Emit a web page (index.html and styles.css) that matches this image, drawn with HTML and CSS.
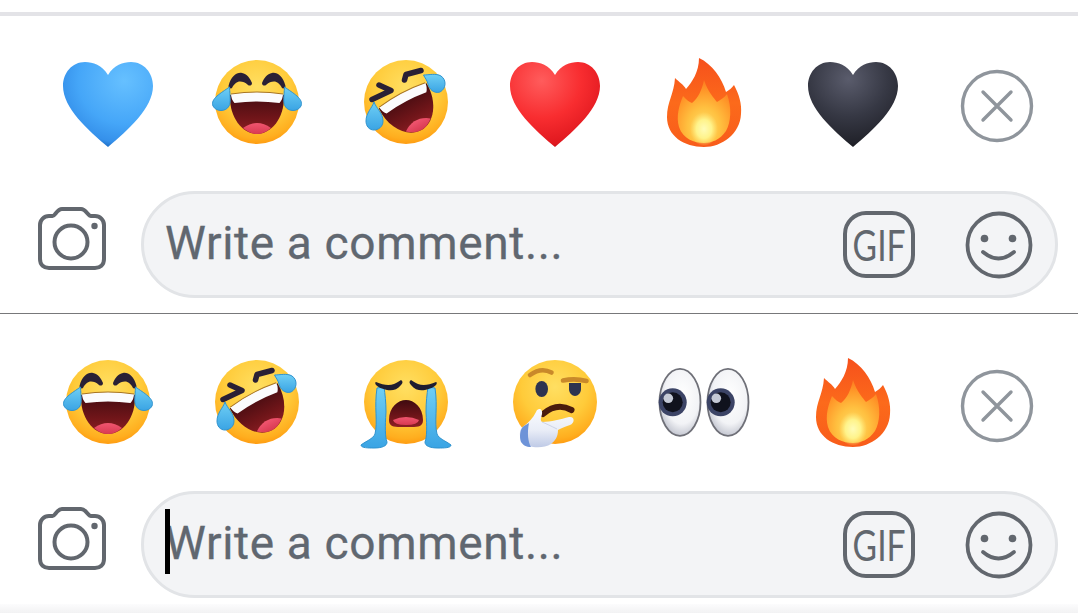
FILE: index.html
```html
<!DOCTYPE html>
<html lang="en">
<head>
<meta charset="utf-8">
<title>Write a comment</title>
<link rel="stylesheet" href="styles.css">
</head>
<body>
<svg class="defs" aria-hidden="true">
  <defs>
    <radialGradient id="gBlue" cx="0.68" cy="0.22" r="0.85">
      <stop offset="0" stop-color="#66c0ff"/><stop offset="0.6" stop-color="#45a6f8"/><stop offset="0.86" stop-color="#3590ea"/><stop offset="1" stop-color="#0d57ad"/>
    </radialGradient>
    <radialGradient id="gRed" cx="0.35" cy="0.22" r="0.88">
      <stop offset="0" stop-color="#ff5c5c"/><stop offset="0.5" stop-color="#f82d30"/><stop offset="0.86" stop-color="#e0181f"/><stop offset="1" stop-color="#8e0a10"/>
    </radialGradient>
    <radialGradient id="gBlack" cx="0.45" cy="0.2" r="0.88">
      <stop offset="0" stop-color="#5a5c6c"/><stop offset="0.5" stop-color="#363844"/><stop offset="0.85" stop-color="#22232b"/><stop offset="1" stop-color="#0e0e13"/>
    </radialGradient>
    <radialGradient id="gFace" cx="0.5" cy="0.32" r="0.72">
      <stop offset="0" stop-color="#ffdf62"/><stop offset="0.55" stop-color="#ffcb3a"/><stop offset="0.85" stop-color="#ffae1f"/><stop offset="1" stop-color="#ff930a"/>
    </radialGradient>
    <linearGradient id="gMouth" x1="0" y1="0" x2="0" y2="1">
      <stop offset="0" stop-color="#3f0b10"/><stop offset="0.6" stop-color="#6f1519"/><stop offset="1" stop-color="#8e1f24"/>
    </linearGradient>
    <linearGradient id="gTongue" x1="0" y1="0" x2="0" y2="1">
      <stop offset="0" stop-color="#f0556f"/><stop offset="1" stop-color="#d93a52"/>
    </linearGradient>
    <linearGradient id="gTear" x1="0" y1="0" x2="0" y2="1">
      <stop offset="0" stop-color="#6fcff5"/><stop offset="1" stop-color="#3aa4e4"/>
    </linearGradient>
    <linearGradient id="gFlame" x1="0" y1="0" x2="0" y2="1">
      <stop offset="0" stop-color="#f6501c"/><stop offset="0.5" stop-color="#fc6a1b"/><stop offset="1" stop-color="#f85c1a"/>
    </linearGradient>
    <radialGradient id="gFlameIn" cx="0.5" cy="0.75" r="0.78">
      <stop offset="0" stop-color="#ffe26a"/><stop offset="0.4" stop-color="#ffc040"/><stop offset="0.72" stop-color="#ff9a2a"/><stop offset="1" stop-color="#fd741e"/>
    </radialGradient>
    <radialGradient id="gFlameCore">
      <stop offset="0" stop-color="#fffcb8"/><stop offset="0.55" stop-color="#fff38a"/><stop offset="1" stop-color="#ffe070" stop-opacity="0"/>
    </radialGradient>
    <radialGradient id="gEye" cx="0.55" cy="0.4" r="0.65">
      <stop offset="0" stop-color="#ffffff"/><stop offset="0.65" stop-color="#f2f3f6"/><stop offset="1" stop-color="#b9bcc8"/>
    </radialGradient>
    <linearGradient id="gHand" x1="0" y1="0" x2="0" y2="1">
      <stop offset="0" stop-color="#fafbff"/><stop offset="0.55" stop-color="#e9edf7"/><stop offset="1" stop-color="#bfcae6"/>
    </linearGradient>
    <symbol id="heart" viewBox="0 0 100 100">
      <path d="M50 23C44 13 35 10 27 10C14 10 5 21 5 34C5 56 30 78 50 95C70 78 95 56 95 34C95 21 86 10 73 10C65 10 56 13 50 23Z"/>
    </symbol>
    <symbol id="laugh" viewBox="0 0 100 100">
      <circle cx="50" cy="50" r="42" fill="url(#gFace)"/>
      <path d="M21.500 34C24 24 30 20 35 21C40 22 43 26 45 31C45 34 42 34 41 33C38 30 36 29.500 33 29.500C30 29.500 27 32 25 36C24 37 21.500 36 21.500 34Z" fill="#2a2035"/>
      <path d="M78.500 34C76 24 70 20 65 21C60 22 57 26 55 31C55 34 58 34 59 33C62 30 64 29.500 67 29.500C70 29.500 73 32 75 36C76 37 78.500 36 78.500 34Z" fill="#2a2035"/>
      <path d="M23 43Q50 38 77 43C78 65 65 82 50 82C35 82 22 65 23 43Z" fill="url(#gMouth)"/>
      <path d="M24 42Q50 38 76 42Q76 47 72.500 51Q50 48 27.500 51Q24 47 24 42Z" fill="#fbfbfd"/>
      <path d="M24 42Q50 38 76 42" fill="none" stroke="#a87420" stroke-width="1"/>
      <path d="M36 76Q50 66 64 76Q57 82 50 82Q43 82 36 76Z" fill="url(#gTongue)"/>
      <path fill="url(#gTear)" stroke="#2f93cf" stroke-width="1" d="M22.500 35C23 45 24 50 22 54C19 60 9 60 6 54C3 47 14 41 22.500 35Z"/>
      <path fill="url(#gTear)" stroke="#2f93cf" stroke-width="1" d="M77.500 35C77 45 76 50 78 54C81 60 91 60 94 54C97 47 86 41 77.500 35Z"/>
    </symbol>
    <symbol id="rofl" viewBox="0 0 100 100">
      <circle cx="50" cy="50" r="42" fill="url(#gFace)"/>
      <g transform="rotate(-28 50 50)">
        <path d="M23 43Q50 38 77 43C78 65 65 82 50 82C35 82 22 65 23 43Z" fill="url(#gMouth)"/>
        <path d="M24 42Q50 38 76 42Q76 47 72.500 51Q50 48 27.500 51Q24 47 24 42Z" fill="#fbfbfd"/>
        <path d="M24 42Q50 38 76 42" fill="none" stroke="#a87420" stroke-width="1"/>
        <path d="M36 76Q50 66 64 76Q57 82 50 82Q43 82 36 76Z" fill="url(#gTongue)"/>
      </g>
      <path d="M23 33L35 38.500L16 47.500" fill="none" stroke="#2a2035" stroke-width="5.500" stroke-linecap="round" stroke-linejoin="round"/>
      <path d="M65 18.500L50 22.500L48.500 28" fill="none" stroke="#2a2035" stroke-width="5.500" stroke-linecap="round" stroke-linejoin="round"/>
      <path fill="url(#gTear)" stroke="#2f93cf" stroke-width="1" d="M67.500 23C73 23 80 21 85 24C91 28 90 37 84 40C78 42 73 37 72 32C71 28 69 26 67.500 23Z"/>
      <path fill="url(#gTear)" stroke="#2f93cf" stroke-width="1" d="M18 50C20 56 27 61 27 69C27 75 22 78 18 78C13 78 10 74 10 69C10 61 16 56 18 50Z"/>
    </symbol>
    <symbol id="cry" viewBox="0 0 100 100">
      <circle cx="50" cy="50" r="42" fill="url(#gFace)"/>
      <path d="M33 68C33 55 42 48 50 48C58 48 67 55 67 68C67 76 60 75 50 75C40 75 33 76 33 68Z" fill="url(#gMouth)"/>
      <path d="M37 68Q50 62 63 68Q62 73 50 73Q38 73 37 68Z" fill="url(#gTongue)"/>
      <path d="M21 36C18 55 22 70 19 82C17 87 10 89 5 93C5 96 12 96 18 96C26 96 31 94 31 90C29 85 29 75 30 60C30 50 29 42 28 35Z" fill="url(#gTear)" stroke="#2f93cf" stroke-width="1"/>
      <path d="M79 36C82 55 78 70 81 82C83 87 90 89 95 93C95 96 88 96 82 96C74 96 69 94 69 90C71 85 71 75 70 60C70 50 71 42 72 35Z" fill="url(#gTear)" stroke="#2f93cf" stroke-width="1"/>
      <path d="M20 30C27 33 33 34 38 32C41 31 43 29 45 28C47 29 47 31 45 33C41 38 36 39 31 38C26 37 22 35 20 33C19 32 19 30 20 30Z" fill="#1f1d30"/>
      <path d="M80 30C73 33 67 34 62 32C59 31 57 29 55 28C53 29 53 31 55 33C59 38 64 39 69 38C74 37 78 35 80 33C81 32 81 30 80 30Z" fill="#1f1d30"/>
    </symbol>
    <symbol id="think" viewBox="0 0 100 100">
      <circle cx="50" cy="50" r="42" fill="url(#gFace)"/>
      <path d="M25 23Q36 15 46.500 20.500M58 28.500Q70 26 81.500 29" fill="none" stroke="#c9892a" stroke-width="4.600" stroke-linecap="round"/>
      <ellipse cx="36.700" cy="37" rx="6.300" ry="8" fill="#2d3350"/>
      <path d="M64 31H76V37C76 41 73 44 70 44C67 44 64 41 64 37Z" fill="#2d3350"/>
      <path d="M38 62Q52 50 66.500 58" fill="none" stroke="#4a1c0d" stroke-width="6" stroke-linecap="round"/>
      <path d="M19 74C24 70 28 66 31 60C33 55 38 57 37 62C36 66 35 68 37 70C46 70 56 67 64 65C70 64 70 71 65 73C60 75 56 76 53 78C53 85 50 89 46 92C40 96 30 96 24 94C17 92 14 85 15 80C15 77 17 75 19 74Z" fill="url(#gHand)"/>
      <path d="M19 74C15 76 14 85 16 90C18 93 21 95 26 95C23 90 22 81 24 71Z" fill="#6d93d8"/>
      <path d="M37 70Q42 72 52 77" fill="none" stroke="#ccd3e6" stroke-width="1"/>
    </symbol>
    <symbol id="eyes" viewBox="0 0 100 100">
      <ellipse cx="26" cy="50.300" rx="20.500" ry="33.500" fill="url(#gEye)" stroke="#6f7078" stroke-width="1.800"/>
      <ellipse cx="74" cy="50.300" rx="20.500" ry="33.500" fill="url(#gEye)" stroke="#6f7078" stroke-width="1.800"/>
      <circle cx="18.700" cy="50.300" r="14" fill="#3c4466"/>
      <circle cx="18.700" cy="50.300" r="10" fill="#10121d"/>
      <circle cx="14.300" cy="46.300" r="4.800" fill="#c5cad6"/>
      <circle cx="66.700" cy="50.300" r="14" fill="#3c4466"/>
      <circle cx="66.700" cy="50.300" r="10" fill="#10121d"/>
      <circle cx="62.300" cy="46.300" r="4.800" fill="#c5cad6"/>
    </symbol>
    <symbol id="fire" viewBox="0 0 100 100">
      <path d="M45 6C58 12 68 26 72 40C75 38 78 36 80 33C85 42 88 52 87 62C86 82 68 95 50 95C30 95 13 84 13 65C13 50 20 42 21 26C25 30 30 33 32 37C38 30 45 20 45 6Z" fill="url(#gFlame)"/>
      <path d="M50 28C54 40 60 46 63 50C66 48 70 46 73 42C78 56 77 70 72 79C66 88 57 91 50 91C40 91 29 87 25 75C22 64 25 54 29 44C33 48 35 50 38 51C44 46 48 38 50 28Z" fill="url(#gFlameIn)"/>
      <ellipse cx="50" cy="77" rx="14" ry="17" fill="url(#gFlameCore)"/>
    </symbol>
    <symbol id="close" viewBox="0 0 100 100">
      <circle cx="45" cy="54" r="34.500" fill="none" stroke="#8f959c" stroke-width="3.400"/>
      <path d="M31 40L59 68M59 40L31 68" fill="none" stroke="#8f959c" stroke-width="3.400" stroke-linecap="round"/>
    </symbol>
    <symbol id="camera" viewBox="0 0 68 63">
      <path d="M11 9H14.500C17 9 19 2 24 2H43C48 2 50 9 53 9H57C62 9 66 13 66 18V52C66 58 62 61 57 61H11C6 61 2 58 2 52V18C2 13 6 9 11 9Z" fill="none" stroke="#62676e" stroke-width="4" stroke-linejoin="round"/>
      <circle cx="33" cy="35" r="16.500" fill="none" stroke="#62676e" stroke-width="4"/>
      <circle cx="56.500" cy="19" r="3.200" fill="#62676e"/>
    </symbol>
    <symbol id="smile" viewBox="0 0 68 68">
      <circle cx="34" cy="34" r="31.500" fill="none" stroke="#62676e" stroke-width="3.800"/>
      <circle cx="19.500" cy="27.500" r="3.800" fill="#62676e"/>
      <circle cx="47.500" cy="27.500" r="3.800" fill="#62676e"/>
      <path d="M18 41Q33.500 54 49 41" fill="none" stroke="#62676e" stroke-width="3.800" stroke-linecap="round"/>
    </symbol>
  </defs>
</svg>

<div class="top-rule"></div>

<section class="panel panel-first">
  <div class="reactions">
    <button class="cell"><svg class="glyph heart-blue"><use href="#heart"/></svg></button>
    <button class="cell"><svg class="glyph"><use href="#laugh"/></svg></button>
    <button class="cell"><svg class="glyph"><use href="#rofl"/></svg></button>
    <button class="cell"><svg class="glyph heart-red"><use href="#heart"/></svg></button>
    <button class="cell"><svg class="glyph"><use href="#fire"/></svg></button>
    <button class="cell"><svg class="glyph heart-black"><use href="#heart"/></svg></button>
    <button class="cell"><svg class="glyph"><use href="#close"/></svg></button>
  </div>
  <div class="composer">
    <svg class="camera"><use href="#camera"/></svg>
    <div class="field">
      <span class="placeholder">Write a comment...</span>
      <span class="gif"><span class="gif-label">GIF</span></span>
      <svg class="smile"><use href="#smile"/></svg>
    </div>
  </div>
</section>

<section class="panel panel-second">
  <div class="reactions">
    <button class="cell"><svg class="glyph"><use href="#laugh"/></svg></button>
    <button class="cell"><svg class="glyph"><use href="#rofl"/></svg></button>
    <button class="cell"><svg class="glyph"><use href="#cry"/></svg></button>
    <button class="cell"><svg class="glyph"><use href="#think"/></svg></button>
    <button class="cell"><svg class="glyph"><use href="#eyes"/></svg></button>
    <button class="cell"><svg class="glyph"><use href="#fire"/></svg></button>
    <button class="cell"><svg class="glyph"><use href="#close"/></svg></button>
  </div>
  <div class="composer">
    <svg class="camera"><use href="#camera"/></svg>
    <div class="field">
      <i class="caret"></i>
      <span class="placeholder">Write a comment...</span>
      <span class="gif"><span class="gif-label">GIF</span></span>
      <svg class="smile"><use href="#smile"/></svg>
    </div>
  </div>
</section>

<div class="bottom-band"></div>
</body>
</html>
```

FILE: styles.css
```css
html, body {
  height: 100%;
}

body {
  margin: 0;
  background: #fff;
  display: flex;
  flex-direction: column;
  overflow: hidden;
  font-family: Roboto, "Liberation Sans", sans-serif;
}

.defs {
  display: block;
  width: 0;
  height: 0;
  flex: none;
}

.top-rule {
  flex: none;
  height: 4px;
  margin-top: 12px;
  background: #e3e3e7;
}

.panel {
  flex: none;
}

.panel-first {
  padding: 36px 0 15px;
  border-bottom: 1px solid #77787a;
}

.panel-second {
  padding: 38px 0 6px;
}

.reactions {
  display: flex;
  padding-left: 33.5px;
}

.cell {
  flex: none;
  width: 149px;
  height: 100px;
  padding: 0;
  border: 0;
  background: none;
  display: flex;
  justify-content: center;
}

.glyph {
  display: block;
  width: 100px;
  height: 100px;
}

.heart-blue { fill: url(#gBlue); }
.heart-red { fill: url(#gRed); }
.heart-black { fill: url(#gBlack); }

.composer {
  display: flex;
  align-items: center;
  gap: 35px;
  margin-top: 39px;
  padding: 0 20px 0 38px;
}

.camera {
  flex: none;
  display: block;
  width: 68px;
  height: 63px;
  margin-bottom: 12px;
}

.field {
  flex: 1;
  position: relative;
  box-sizing: border-box;
  height: 107px;
  display: flex;
  align-items: center;
  padding: 0 22px 0 21px;
  border: 3px solid #e2e4e7;
  border-radius: 54px;
  background: #f3f4f6;
}

.placeholder {
  flex: 1;
  padding-bottom: 3px;
  font-size: 46px;
  letter-spacing: 0.65px;
  line-height: 1;
  color: #606770;
  -webkit-text-stroke: 0.3px #606770;
}

.gif {
  flex: none;
  box-sizing: border-box;
  width: 72px;
  height: 67px;
  margin-right: 50px;
  display: flex;
  align-items: center;
  justify-content: center;
  border: 4px solid #62676e;
  border-radius: 23px;
  color: #62676e;
}

.gif-label {
  display: inline-block;
  font-family: Lato, sans-serif;
  font-size: 42px;
  line-height: 1;
  transform: scaleX(0.8);
}

.smile {
  flex: none;
  display: block;
  width: 68px;
  height: 68px;
}

.caret {
  position: absolute;
  left: 21px;
  top: 15px;
  width: 5px;
  height: 65px;
  background: #000;
}

.bottom-band {
  flex: 1;
  background: linear-gradient(#fcfcfd, #f2f2f3);
}
```
